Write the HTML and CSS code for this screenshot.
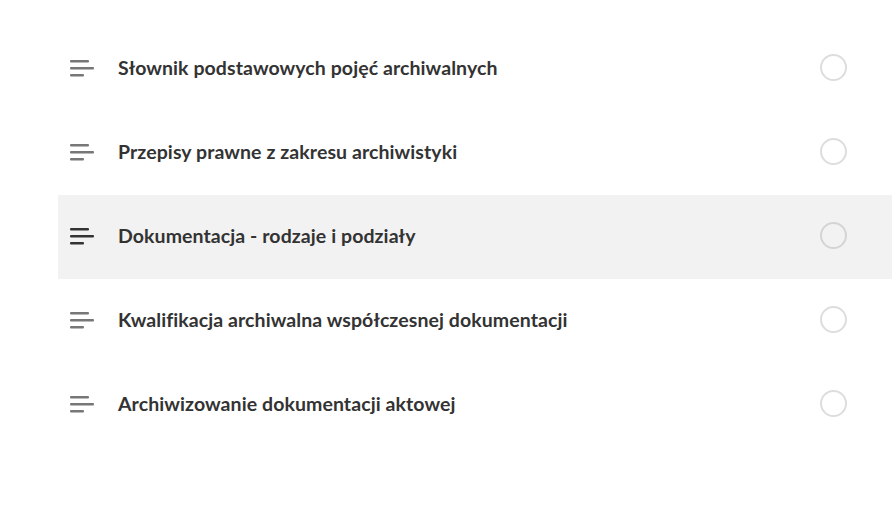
FILE: index.html
```html
<!DOCTYPE html>
<html lang="pl">
<head>
<meta charset="utf-8">
<link rel="stylesheet" href="styles.css">
</head>
<body>
<ul class="list">
  <li class="row">
    <svg class="menu-icon" width="26" height="18" viewBox="0 0 26 18"><rect x="0" y="1" width="19" height="2.6" rx="1"/><rect x="0" y="8" width="24" height="2.6" rx="1"/><rect x="0" y="15" width="14" height="2.6" rx="1"/></svg>
    <span class="title">Słownik podstawowych pojęć archiwalnych</span>
    <span class="check"></span>
  </li>
  <li class="row">
    <svg class="menu-icon" width="26" height="18" viewBox="0 0 26 18"><rect x="0" y="1" width="19" height="2.6" rx="1"/><rect x="0" y="8" width="24" height="2.6" rx="1"/><rect x="0" y="15" width="14" height="2.6" rx="1"/></svg>
    <span class="title">Przepisy prawne z zakresu archiwistyki</span>
    <span class="check"></span>
  </li>
  <li class="row active">
    <svg class="menu-icon" width="26" height="18" viewBox="0 0 26 18"><rect x="0" y="1" width="19" height="2.6" rx="1"/><rect x="0" y="8" width="24" height="2.6" rx="1"/><rect x="0" y="15" width="14" height="2.6" rx="1"/></svg>
    <span class="title">Dokumentacja - rodzaje i podziały</span>
    <span class="check"></span>
  </li>
  <li class="row">
    <svg class="menu-icon" width="26" height="18" viewBox="0 0 26 18"><rect x="0" y="1" width="19" height="2.6" rx="1"/><rect x="0" y="8" width="24" height="2.6" rx="1"/><rect x="0" y="15" width="14" height="2.6" rx="1"/></svg>
    <span class="title">Kwalifikacja archiwalna współczesnej dokumentacji</span>
    <span class="check"></span>
  </li>
  <li class="row">
    <svg class="menu-icon" width="26" height="18" viewBox="0 0 26 18"><rect x="0" y="1" width="19" height="2.6" rx="1"/><rect x="0" y="8" width="24" height="2.6" rx="1"/><rect x="0" y="15" width="14" height="2.6" rx="1"/></svg>
    <span class="title">Archiwizowanie dokumentacji aktowej</span>
    <span class="check"></span>
  </li>
</ul>
</body>
</html>
```

FILE: styles.css
```css
html, body {
  margin: 0;
  padding: 0;
  background: #fff;
}
body {
  font-family: Lato, "Liberation Sans", sans-serif;
}
.list {
  list-style: none;
  margin: 27px 4px 0 58px;
  padding: 0;
}
.row {
  display: flex;
  align-items: center;
  height: 84px;
  padding: 0 45px 0 12px;
}
.row.active {
  background: #f2f2f2;
}
.menu-icon {
  flex: none;
  fill: #777;
  margin-right: 22px;
  margin-top: -2px;
}
.row.active .menu-icon {
  fill: #333;
}
.title {
  flex: 1;
  font-size: 19.5px;
  line-height: 24px;
  font-weight: 700;
  color: #333;
  letter-spacing: 0.08px;
  margin-top: -3px;
}
.check {
  flex: none;
  width: 23px;
  height: 23px;
  border: 2px solid #ddd;
  border-radius: 50%;
  margin-top: -4px;
}
.row.active .check {
  border-color: #d4d4d4;
}
```
